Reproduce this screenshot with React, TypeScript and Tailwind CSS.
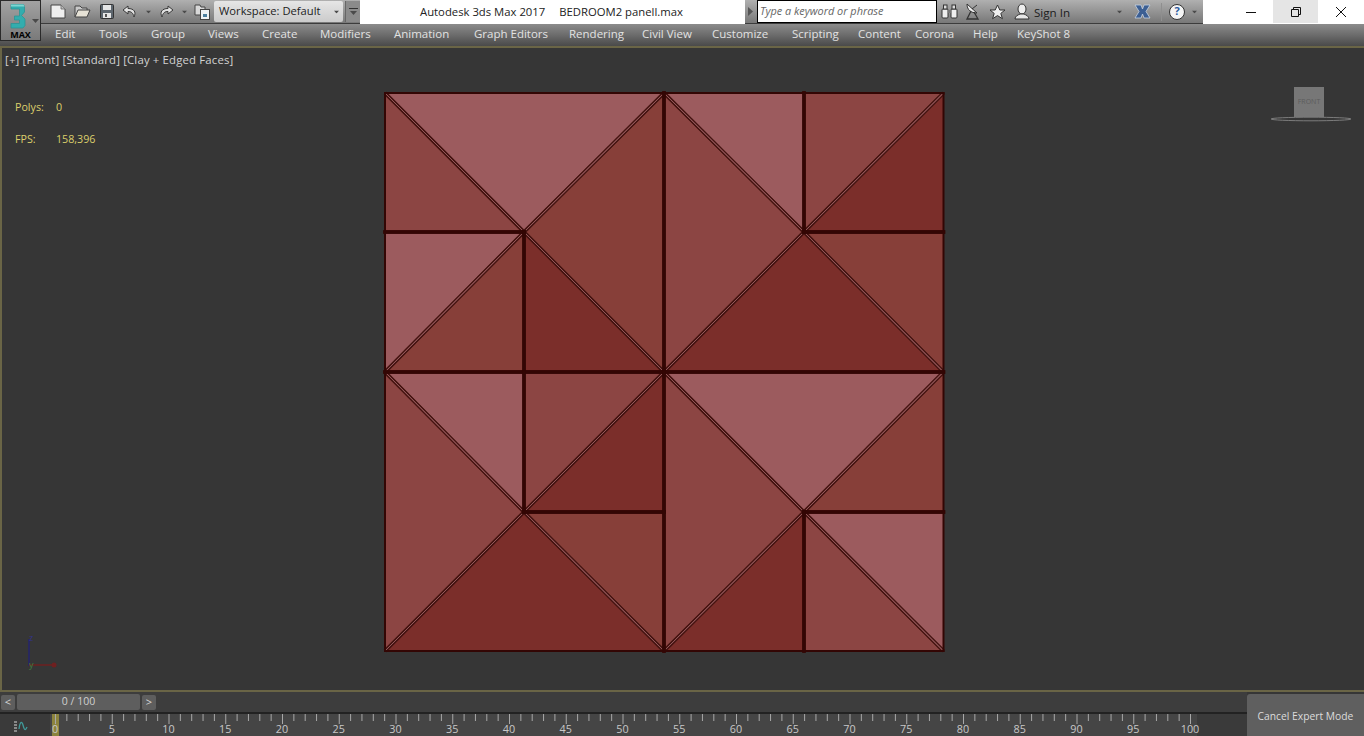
const UI_FONT = "font-['Open_Sans',sans-serif]";

const menuItems = [
  { label: "Edit", className: "w-[44px]" },
  { label: "Tools", className: "w-[52px]" },
  { label: "Group", className: "w-[57px]" },
  { label: "Views", className: "w-[54px]" },
  { label: "Create", className: "w-[58px]" },
  { label: "Modifiers", className: "w-[74px]" },
  { label: "Animation", className: "w-[80px]" },
  { label: "Graph Editors", className: "w-[95px]" },
  { label: "Rendering", className: "w-[73px]" },
  { label: "Civil View", className: "w-[70px]" },
  { label: "Customize", className: "w-[80px]" },
  { label: "Scripting", className: "w-[66px]" },
  { label: "Content", className: "w-[57px]" },
  { label: "Corona", className: "w-[58px]" },
  { label: "Help", className: "w-[44px]" },
  { label: "KeyShot 8", className: "w-[70px]" },
];

const GX = [385, 524, 664, 804, 943.5];
const GY = [93, 232, 372, 512, 651];
const LIGHT = "#9c5b5e";
const MID = "#8c4543";
const WARM = "#873f39";
const DARK = "#7b2e2a";

type Tri = { p: number[][]; c: string };

const tris: Tri[] = [
  { p: [[0, 0], [2, 0], [1, 1]], c: LIGHT },
  { p: [[0, 0], [1, 1], [0, 1]], c: MID },
  { p: [[2, 0], [2, 2], [1, 1]], c: WARM },
  { p: [[0, 1], [1, 1], [0, 2]], c: LIGHT },
  { p: [[1, 1], [1, 2], [0, 2]], c: WARM },
  { p: [[1, 1], [2, 2], [1, 2]], c: DARK },

  { p: [[2, 0], [3, 0], [3, 1]], c: LIGHT },
  { p: [[2, 0], [3, 1], [2, 2]], c: MID },
  { p: [[3, 0], [4, 0], [3, 1]], c: MID },
  { p: [[4, 0], [4, 1], [3, 1]], c: DARK },
  { p: [[3, 1], [4, 1], [4, 2]], c: WARM },
  { p: [[3, 1], [4, 2], [2, 2]], c: DARK },

  { p: [[0, 2], [1, 2], [1, 3]], c: LIGHT },
  { p: [[0, 2], [1, 3], [0, 4]], c: MID },
  { p: [[1, 2], [2, 2], [1, 3]], c: MID },
  { p: [[2, 2], [2, 3], [1, 3]], c: DARK },
  { p: [[1, 3], [2, 3], [2, 4]], c: WARM },
  { p: [[1, 3], [2, 4], [0, 4]], c: DARK },

  { p: [[2, 2], [4, 2], [3, 3]], c: LIGHT },
  { p: [[4, 2], [4, 3], [3, 3]], c: WARM },
  { p: [[2, 2], [3, 3], [2, 4]], c: MID },
  { p: [[3, 3], [3, 4], [2, 4]], c: DARK },
  { p: [[3, 3], [4, 3], [4, 4]], c: LIGHT },
  { p: [[3, 3], [4, 4], [3, 4]], c: MID },
];

function edges() {
  const out: { a: number[]; b: number[] }[] = [];
  for (const t of tris) {
    for (let i = 0; i < 3; i++) {
      out.push({ a: t.p[i], b: t.p[(i + 1) % 3] });
    }
  }
  return out;
}

function PanelMesh() {
  const all = edges();
  const diagonals = all.filter((e) => e.a[0] !== e.b[0] && e.a[1] !== e.b[1]);
  const straight = all.filter((e) => e.a[0] === e.b[0] || e.a[1] === e.b[1]);
  const isOuter = (e: { a: number[]; b: number[] }) =>
    (e.a[0] === e.b[0] && (e.a[0] === 0 || e.a[0] === 4)) ||
    (e.a[1] === e.b[1] && (e.a[1] === 0 || e.a[1] === 4));
  return (
    <svg width="564" height="563" viewBox="383 91 564 563" className="block">
      {tris.map((t, i) => (
        <polygon
          key={i}
          points={t.p.map(([x, y]) => `${GX[x]},${GY[y]}`).join(" ")}
          fill={t.c}
        />
      ))}
      {diagonals.map((e, i) => (
        <line
          key={i}
          x1={GX[e.a[0]]}
          y1={GY[e.a[1]]}
          x2={GX[e.b[0]]}
          y2={GY[e.b[1]]}
          stroke="#451411"
          strokeWidth="3.4"
        />
      ))}
      {diagonals.map((e, i) => (
        <line
          key={i}
          x1={GX[e.a[0]]}
          y1={GY[e.a[1]]}
          x2={GX[e.b[0]]}
          y2={GY[e.b[1]]}
          stroke="#94575a"
          strokeWidth="1"
        />
      ))}
      {straight.map((e, i) => (
        <line
          key={i}
          x1={GX[e.a[0]]}
          y1={GY[e.a[1]]}
          x2={GX[e.b[0]]}
          y2={GY[e.b[1]]}
          stroke="#330604"
          strokeWidth={isOuter(e) ? 2 : 3.4}
          strokeLinecap="square"
        />
      ))}
    </svg>
  );
}

function Caret({ className = "" }: { className?: string }) {
  return (
    <svg width="7" height="4" viewBox="0 0 7 4" className={className}>
      <path d="M0 0h7L3.5 4z" fill="#4a4a4a" />
    </svg>
  );
}

function LeftToolbar() {
  return (
    <div className="flex h-[24px] w-[320px] items-center bg-gradient-to-b from-[#b0b0b0] to-[#787878] border-b border-[#3c3c3c]">
      {/* new */}
      <svg width="16" height="15" viewBox="0 0 16 15" className="ml-[10px]">
        <path d="M1 1h10l4 4v9H1z" fill="#eeeeee" stroke="#444" strokeWidth="1" />
        <path d="M11 1v4h4" fill="#bdbdbd" stroke="#666" strokeWidth="0.8" />
      </svg>
      {/* open */}
      <svg width="17" height="13" viewBox="0 0 17 13" className="ml-[8px]">
        <path d="M1 12V1h5l2 2h5v2" fill="#c9c9c9" stroke="#444" />
        <path d="M1 12l3-7h12l-3 7z" fill="#e6e2d6" stroke="#444" />
      </svg>
      {/* save */}
      <svg width="14" height="15" viewBox="0 0 14 15" className="ml-[9px]">
        <rect x="0.5" y="0.5" width="13" height="14" rx="1" fill="#5d666e" stroke="#333" />
        <rect x="3" y="1" width="8" height="5" fill="#e6e6e6" />
        <rect x="3" y="9" width="8" height="5" fill="#e6e6e6" />
        <rect x="5" y="10" width="2" height="3" fill="#555" />
      </svg>
      {/* undo */}
      <svg width="16" height="13" viewBox="0 0 16 13" className="ml-[8px]">
        <path d="M6 1L1 5l5 4V6.500c3 0 5 1 6 5.500 2.500-5 0-8.500-6-8.500z" fill="#e0e0e0" stroke="#3a3a3a" strokeWidth="1" />
      </svg>
      <Caret className="ml-[7px] scale-75" />
      {/* redo */}
      <svg width="16" height="13" viewBox="0 0 16 13" className="ml-[6px]">
        <path d="M10 1l5 4-5 4V6.500c-3 0-5 1-6 5.500-2.500-5 0-8.500 6-8.500z" fill="#e0e0e0" stroke="#3a3a3a" strokeWidth="1" />
      </svg>
      <Caret className="ml-[7px] scale-75" />
      {/* project folder */}
      <svg width="16" height="17" viewBox="0 0 16 17" className="ml-[6px]">
        <path d="M1 2h5l1 2h4v8H1z" fill="#d8d8d8" stroke="#444" />
        <rect x="6.500" y="6.500" width="9" height="10" fill="#eef2f4" stroke="#444" />
        <rect x="9" y="11" width="4" height="3" fill="#4b7f9e" />
      </svg>
      {/* workspace combo */}
      <div className="ml-[4px] flex h-[21px] w-[129px] items-center rounded-[2px] bg-gradient-to-b from-[#e6e6e6] to-[#cbcbcb] pl-[5px] text-[11.2px] text-[#222]">
        <span className="flex-1">Workspace: Default</span>
        <Caret className="mr-[3px] scale-75" />
      </div>
      {/* overflow */}
      <div className="ml-[2px] flex h-[21px] w-[15px] flex-col items-center justify-center gap-[2px] bg-[#8b8b8b] border-l border-[#666]">
        <div className="h-[1px] w-[9px] bg-[#333]" />
        <Caret />
      </div>
    </div>
  );
}

function RightToolbar() {
  return (
    <div className="flex h-[24px] w-[458px] items-center bg-gradient-to-b from-[#b0b0b0] to-[#787878] border-b border-[#3c3c3c]">
      <svg width="5" height="9" viewBox="0 0 5 9" className="ml-[3px]">
        <path d="M0 0l5 4.500L0 9z" fill="#555" />
      </svg>
      <div className="ml-[4px] flex h-[23px] w-[180px] items-center border border-black bg-white pl-[2px] text-[10.9px] italic text-[#666]">
        Type a keyword or phrase
      </div>
      {/* binoculars */}
      <svg width="17" height="15" viewBox="0 0 17 15" className="ml-[4px]">
        <rect x="1" y="5" width="6" height="9" rx="1" fill="#eee" stroke="#333" />
        <rect x="10" y="5" width="6" height="9" rx="1" fill="#eee" stroke="#333" />
        <rect x="2.500" y="1" width="3.500" height="4" fill="#ddd" stroke="#333" />
        <rect x="11" y="1" width="3.500" height="4" fill="#ddd" stroke="#333" />
        <rect x="7" y="6" width="3" height="3" fill="#777" />
      </svg>
      {/* satellite */}
      <svg width="15" height="17" viewBox="0 0 15 17" className="ml-[7px]">
        <path d="M2 1c0 6 4 9 10 9z" fill="#ededed" stroke="#333" />
        <path d="M6 8l-4 8h11L9 9" fill="none" stroke="#333" strokeWidth="1.300" />
        <path d="M7 6l5-4" stroke="#333" />
      </svg>
      {/* star */}
      <svg width="17" height="16" viewBox="0 0 17 16" className="ml-[9px]">
        <path d="M8.500 1l2.300 5h5.200l-4.200 3.400 1.600 5.300-4.900-3.100-4.900 3.100 1.600-5.300L1 6h5.200z" fill="#f0f0f0" stroke="#333" />
      </svg>
      {/* user */}
      <svg width="16" height="17" viewBox="0 0 16 17" className="ml-[8px]">
        <ellipse cx="8" cy="6" rx="4" ry="5" fill="#eeeeee" stroke="#333" />
        <path d="M1 16c0-3 3-4 5-5h4c2 1 5 2 5 5z" fill="#e6e6e6" stroke="#333" />
      </svg>
      <span className="ml-[4px] w-[82px] pt-[2px] text-[11.6px] text-[#1c1c1c]">Sign In</span>
      <Caret className="scale-75" />
      {/* exchange X */}
      <svg width="17" height="15" viewBox="0 0 17 15" className="ml-[11px]">
        <path d="M1 1h6l1.500 4L10 1h6l-4 6.500 4 6.500h-6L8.500 10 7 14H1l4-6.500z" fill="#3c5f93" stroke="#c5d2e2" strokeWidth="0.800" />
      </svg>
      <div className="ml-[10px] h-[18px] w-px bg-[#8f8f8f]" />
      {/* help */}
      <div className="ml-[7px] flex h-[16px] w-[16px] items-center justify-center rounded-full border border-[#333] bg-[#f4f4f4] text-[11px] font-bold text-[#2a5a9c]">
        ?
      </div>
      <Caret className="ml-[6px] scale-75" />
    </div>
  );
}

function WindowControls() {
  return (
    <div className="flex h-[24px] flex-1 justify-end bg-white">
      <div className="flex h-[23px] w-[45px] items-center justify-center">
        <svg width="10" height="10" viewBox="0 0 10 10">
          <path d="M0 5.500h10" stroke="#111" />
        </svg>
      </div>
      <div className="flex h-[23px] w-[45px] items-center justify-center bg-[#e5e5e5]">
        <svg width="10" height="10" viewBox="0 0 10 10">
          <path d="M2.500 2.500V.5h7v7h-2M.5 2.500h7v7h-7z" fill="none" stroke="#111" />
        </svg>
      </div>
      <div className="flex h-[23px] w-[46px] items-center justify-center">
        <svg width="10" height="10" viewBox="0 0 10 10">
          <path d="M0 0l10 10M10 0L0 10" stroke="#111" />
        </svg>
      </div>
    </div>
  );
}

function TitleRow() {
  return (
    <div className="flex h-[24px] w-full pl-[40px]">
      <LeftToolbar />
      <div className="flex h-[24px] w-[385px] items-center bg-white pl-[60px] text-[11.3px] text-[#222]">
        <span>Autodesk 3ds Max 2017</span>
        <span className="ml-[14px]">BEDROOM2 panell.max</span>
      </div>
      <RightToolbar />
      <WindowControls />
    </div>
  );
}

function MenuBar() {
  return (
    <div className="flex h-[22px] items-center bg-gradient-to-b from-[#8c8c8c] via-[#6c6c6c] to-[#4a4a4a] pb-[2px] pl-[55px] text-[11.5px] text-[#e2e2e2]">
      {menuItems.map((m) => (
        <div key={m.label} className={m.className}>
          {m.label}
        </div>
      ))}
    </div>
  );
}

function AppLogo() {
  return (
    <div className="absolute left-0 top-0 z-10 flex h-[41px] w-[41px] flex-col items-center border border-[#2a2a2a] bg-gradient-to-b from-[#a2a2a2] to-[#7a7a7a]">
      <svg width="20" height="28" viewBox="0 0 20 28" className="mr-[5px] mt-[1px]">
        <path
          d="M3 2.500h12.500l1 2v5.500l-3 3.500 3.500 3.500v6.500l-2 2.500H3v-4.500h8.500v-3.500H6.500v-4h5V7H3z"
          fill="#33adae"
          stroke="#2b9496"
          strokeWidth="0.800"
          strokeLinejoin="round"
        />
        <path d="M3 2.500h12.500l1 2H3z" fill="#7fd6d2" />
      </svg>
      <div className="text-[9px] font-bold leading-[10px] text-black">
        MAX
      </div>
      <Caret className="absolute right-[1px] top-[18px]" />
    </div>
  );
}

function ViewCube() {
  return (
    <div className="absolute left-[1264px] top-[37px] h-[42px] w-[88px]">
      <div className="absolute left-[28px] top-[2px] flex h-[30px] w-[30px] items-center justify-center bg-[#777777] text-[7px] text-[#5c5c5c]">
        FRONT
      </div>
      <svg width="86" height="12" viewBox="0 0 86 12" className="absolute left-[2px] top-[28px]">
        <ellipse cx="43" cy="6" rx="40" ry="1.800" fill="none" stroke="#7c7c7c" strokeWidth="1" />
      </svg>
    </div>
  );
}

function AxisGizmo() {
  return (
    <svg width="40" height="48" viewBox="0 0 40 48" className="absolute left-[20px] top-[577px]">
      <path d="M7 14v27" stroke="#24246e" strokeWidth="1.500" />
      <path d="M7 40h24" stroke="#6e2020" strokeWidth="1.500" />
      <circle cx="32" cy="40" r="2.500" fill="#6e2020" />
      <text x="7" y="16" fontSize="9" fill="#33338a">z</text>
      <text x="7" y="43" fontSize="9" fill="#3f7f3f">y</text>
    </svg>
  );
}

function Viewport() {
  return (
    <div className="relative min-h-0 flex-1 border-y-2 border-l-[2px] border-y-[#6a6546] border-l-[#6a6546] bg-[#363636] pl-[381px] pt-[43px]">
      <PanelMesh />
      <div className="absolute left-[3px] top-[3px] text-[11.4px] tracking-[0.15px] text-[#d2d2d2]">
        [+] [Front] [Standard] [Clay + Edged Faces]
      </div>
      <div className="absolute left-[13px] top-[51px] text-[10.7px] text-[#dccf6c]">
        <div className="flex h-[32px]">
          <span className="w-[41px]">Polys:</span>
          <span>0</span>
        </div>
        <div className="flex">
          <span className="w-[41px]">FPS:</span>
          <span>158,396</span>
        </div>
      </div>
      <ViewCube />
      <AxisGizmo />
    </div>
  );
}

function TimeSlider() {
  return (
    <div className="flex h-[20px] items-center bg-[#3d3d3d] pl-[1px]">
      <div className="flex h-[15px] w-[14px] items-center justify-center rounded-[2px] bg-[#5e5e5e] text-[11px] text-[#d8d8d8]">
        &lt;
      </div>
      <div className="ml-[2px] flex h-[16px] w-[123px] items-center justify-center rounded-[2px] bg-[#5e5e5e] text-[10.500px] text-[#d0d0d0]">
        0 / 100
      </div>
      <div className="ml-[2px] flex h-[15px] w-[14px] items-center justify-center rounded-[2px] bg-[#5e5e5e] text-[11px] text-[#d8d8d8]">
        &gt;
      </div>
    </div>
  );
}

const frames = Array.from({ length: 101 }, (_, i) => i);
const labels = frames.filter((f) => f % 5 === 0);

function TrackBar() {
  return (
    <div className="relative flex h-[24px] border-t-2 border-[#222222] bg-[#3a3a3a]">
      <svg width="18" height="14" viewBox="0 0 18 14" className="absolute left-[13px] top-[6px]">
        <path d="M1 2h3M1 5h3M1 8h3M1 11h3" stroke="#d8d8d8" />
        <path d="M6 9c1-8 3-8 4-4s2 7 4 2" fill="none" stroke="#3f9a9a" strokeWidth="1.300" />
      </svg>
      <div className="ml-[50px] flex h-full w-[1147px] bg-[#454545]">
        <div className="absolute left-[52px] top-0 h-[22px] w-[7px] bg-[#a49a3c]/75" />
        <div className="relative ml-[-23.400px] flex">
          {labels.map((f) => (
            <div key={f} className="w-[56.750px] pt-[8px] text-center text-[10.800px] leading-[14px] text-[#c8c8c8]">
              {f}
            </div>
          ))}
        </div>
      </div>
      <svg width="1150" height="12" viewBox="0 0 1150 12" className="absolute left-[50px] top-0">
        {frames.map((f) => (
          <line
            key={f}
            x1={5.5 + f * 11.35}
            x2={5.5 + f * 11.35}
            y1="0"
            y2={f % 5 === 0 ? 10 : 7}
            stroke="#a8a8a8"
            strokeWidth="1"
          />
        ))}
      </svg>
    </div>
  );
}

export default function App() {
  return (
    <div className={`relative flex h-screen w-full flex-col overflow-hidden bg-[#363636] ${UI_FONT}`}>
      <AppLogo />
      <TitleRow />
      <MenuBar />
      <Viewport />
      <div className="flex h-[44px]">
        <div className="flex min-w-0 flex-1 flex-col">
          <TimeSlider />
          <TrackBar />
        </div>
        <div className="mt-[2px] flex w-[117px] items-center justify-center rounded-tl-[3px] bg-[#5f5f5f] pt-[3px] text-[10.300px] text-[#dcdcdc]">
          Cancel Expert Mode
        </div>
      </div>
    </div>
  );
}
